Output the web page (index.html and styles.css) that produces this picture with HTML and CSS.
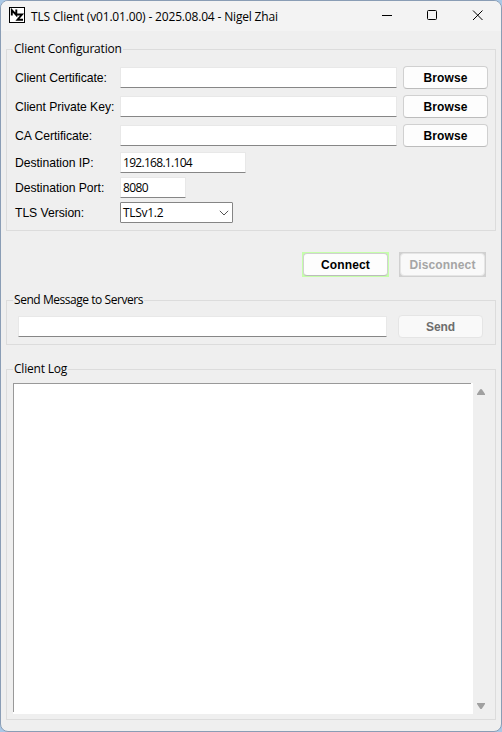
FILE: index.html
```html
<!DOCTYPE html>
<html lang="en">
<head>
<meta charset="utf-8">
<title>TLS Client</title>
<link rel="stylesheet" href="styles.css">
</head>
<body>
<div class="window">
  <header class="titlebar">
    <svg class="logo" width="16" height="16" viewBox="0 0 16 16"><rect x=".5" y=".5" width="15" height="15" fill="#fff" stroke="#000"/><path d="M2.800 8.500V3.200L7.300 8V2.500M7.500 7.500H13L8.500 12.700H14" fill="none" stroke="#000" stroke-width="1.900"/></svg>
    <h1 class="title">TLS Client (v01.01.00) - 2025.08.04 - Nigel Zhai</h1>
    <div class="controls">
      <svg width="45" height="30" viewBox="0 0 45 30"><path d="M17 14.500H27" stroke="#000"/></svg>
      <svg width="46" height="30" viewBox="0 0 46 30"><rect x="17.500" y="9.500" width="9" height="9" rx="1" fill="none" stroke="#000"/></svg>
      <svg width="45" height="30" viewBox="0 0 45 30"><path d="M17 9.500L26.500 19M26.500 9.500L17 19" stroke="#000"/></svg>
    </div>
  </header>

  <section class="group config">
    <h2 class="legend">Client Configuration</h2>
    <div class="row"><label>Client Certificate:</label><div class="field"></div><button class="btn">Browse</button></div>
    <div class="row"><label>Client Private Key:</label><div class="field"></div><button class="btn">Browse</button></div>
    <div class="row"><label>CA Certificate:</label><div class="field"></div><button class="btn">Browse</button></div>
    <div class="row short"><label>Destination IP:</label><div class="field ip"><span>192.168.1.104</span></div></div>
    <div class="row short"><label>Destination Port:</label><div class="field port"><span>8080</span></div></div>
    <div class="row short"><label>TLS Version:</label><div class="select"><span>TLSv1.2</span><svg width="10" height="6" viewBox="0 0 10 6"><path d="M.8 .8L5 5L9.200 .8" fill="none" stroke="#555"/></svg></div></div>
  </section>

  <div class="actions">
    <div class="frame green"><button class="btn">Connect</button></div>
    <div class="frame gray"><button class="btn off">Disconnect</button></div>
  </div>

  <section class="group send">
    <h2 class="legend">Send Message to Servers</h2>
    <div class="field message"></div>
    <button class="btn dim">Send</button>
  </section>

  <section class="group log">
    <h2 class="legend">Client Log</h2>
    <div class="output"></div>
    <div class="scroll">
      <svg width="8" height="6" viewBox="0 0 8 6"><path d="M0 6V5L3 .6Q4 -.4 5 .6L8 5V6Z" fill="#a0a0a0"/></svg>
      <svg width="8" height="6" viewBox="0 0 8 6"><path d="M0 0V1L3 5.400Q4 6.400 5 5.400L8 1V0Z" fill="#a0a0a0"/></svg>
    </div>
  </section>
</div>
</body>
</html>
```
FILE: styles.css
```css
* { box-sizing: border-box; }
body { margin: 0; background: #a9c8e6; font: 12px "Open Sans", sans-serif; color: #000; overflow: hidden; }
h1, h2 { margin: 0; font-weight: 400; }
.window { width: 502px; height: 732px; border: 1px solid #8a9db5; border-radius: 8px; background: #efefef; overflow: hidden; display: flex; flex-direction: column; }
.titlebar { height: 30px; flex: none; background: #f3f3f3; display: flex; align-items: center; padding-left: 8px; }
.logo { margin-top: -2px; }
.title { margin: 1px 0 0 6px; font-size: 12px; line-height: 30px; letter-spacing: -.17px; white-space: nowrap; }
.controls { margin-left: auto; display: flex; }
.group { margin: 0 5px; border: 1px solid #dcdcdc; flex: none; }
.legend { width: max-content; height: 16px; margin: -9px 0 0 6px; padding: 0 1px; background: #efefef; font-size: 12px; line-height: 16px; letter-spacing: -.2px; white-space: nowrap; }
.config { height: 182px; margin-top: 18px; }
.config .legend { margin-bottom: 6px; }
.row { height: 29px; display: flex; align-items: center; padding-left: 8px; }
.row.short { height: 25px; }
.row label { width: 105px; font: 12.2px "Liberation Sans", Arial, sans-serif; letter-spacing: -.05px; white-space: nowrap; }
.field { width: 277px; height: 21px; background: #fff; border: 1px solid #e8e8e8; border-bottom-color: #868686; border-radius: 1px; }
.field span { display: block; padding-left: 2px; line-height: 19px; letter-spacing: -.7px; }
.field.port span { letter-spacing: -.6px; }
.ip { width: 126px; }
.port { width: 66px; }
.select { width: 113px; height: 21px; border: 1px solid #858585; border-radius: 1px; background: #fff; display: flex; align-items: center; justify-content: space-between; padding: 0 3px 0 2px; letter-spacing: -.3px; }
.btn { display: block; width: 85px; height: 23px; padding: 0; background: #fdfdfd; border: 1px solid #d0d0d0; border-bottom-color: #bcbcbc; border-radius: 4px; font: bold 12px "Liberation Sans", Arial, sans-serif; letter-spacing: .15px; color: #000; }
.row .btn { margin-left: 6px; }
.actions { display: flex; gap: 10px; padding-left: 301px; margin-top: 21px; height: 25px; flex: none; }
.frame { padding: 1px; width: 87px; height: 25px; }
.green { background: #c5ffaa; }
.gray { background: #d0d0d0; }
.btn.off { color: #a5a5a5; background: #f9f9f9; border-color: #e5e5e5; }
.btn.dim { color: #6d6d6d; background: #f9f9f9; border-color: #e5e5e5; letter-spacing: -.1px; }
.send { height: 45px; margin-top: 23px; display: grid; grid-template-columns: 369px 85px; column-gap: 11px; padding-left: 11px; align-content: start; }
.send .legend { grid-column: 1 / 3; margin-left: -5px; margin-bottom: 7px; letter-spacing: -.45px; }
.message { width: 369px; margin-top: 1px; }
.log { height: 351px; margin-top: 24px; display: grid; grid-template-columns: 460px 16px; padding-left: 6px; align-content: start; }
.log .legend { grid-column: 1 / 3; margin-left: 0; margin-bottom: 6px; }
.output { height: 331px; background: linear-gradient(#999, #999) 0 0 / 458px 1px no-repeat, linear-gradient(#999, #999) 0 0 / 1px 329px no-repeat, #fff; }
.scroll { height: 331px; display: flex; flex-direction: column; justify-content: space-between; align-items: center; padding: 6px 0 5px; }
```
